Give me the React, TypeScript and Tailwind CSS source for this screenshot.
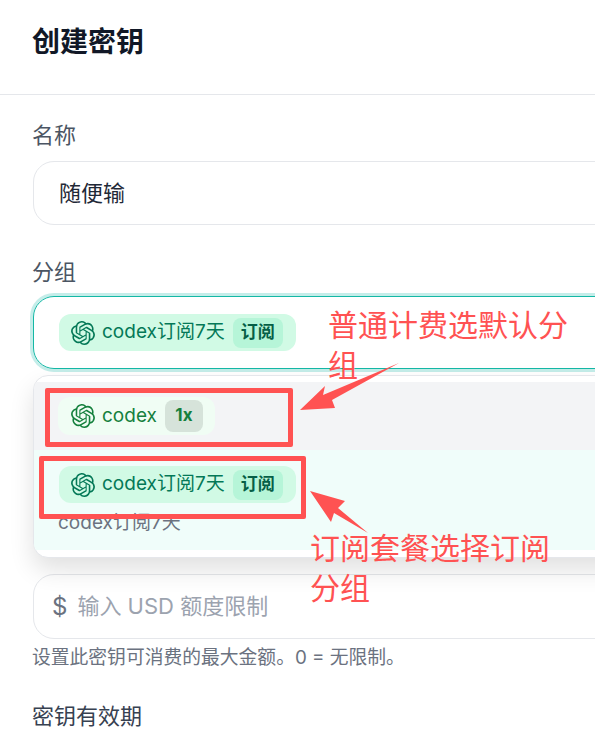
import React from "react";
import { SiOpenai } from "react-icons/si";

const font = "font-['Inter','Noto_Sans_CJK_SC',sans-serif]";

// group chip shown in the select and in the dropdown rows
const SubBadge: React.FC = () => (
  <span className="inline-flex h-[37px] w-[237px] items-center rounded-[12px] bg-[#d1fae5] pl-[12px] text-[19px] text-[#047857]">
    <SiOpenai className="h-[24px] w-[24px] shrink-0" />
    <span className="ml-[7px] whitespace-nowrap">codex订阅7天</span>
    <span className="ml-[8px] flex h-[30px] w-[50px] items-center justify-center rounded-[8px] bg-[#b6f5d8] text-[17px] font-bold text-[#065f46]">
      订阅
    </span>
  </span>
);

const PlainBadge: React.FC = () => (
  <span className="inline-flex h-[38px] w-[157px] items-center rounded-[12px] bg-[#f0fdf4] pl-[13px] text-[19px] text-[#15803d]">
    <SiOpenai className="h-[24px] w-[24px] shrink-0" />
    <span className="ml-[7px]">codex</span>
    <span className="ml-[8px] flex h-[32px] w-[38px] items-center justify-center rounded-[8px] bg-[#d6e3da] text-[17px] font-bold text-[#15803d]">
      1x
    </span>
  </span>
);

const App: React.FC = () => {
  return (
    <div className={`relative h-[745px] w-full overflow-hidden bg-white ${font}`}>
      <div className="flex h-[95px] items-center border-b border-[#e5e7eb] pb-[10px] pl-[32px]">
        <h1 className="text-[28px] font-bold text-[#111827]">创建密钥</h1>
      </div>

      <div className="w-[640px] pl-[33px]">
        <label className="-ml-px mt-[24px] block h-[32px] text-[22px] leading-[32px] text-[#4b5563]">名称</label>
        <div className="mt-[10px] flex h-[64px] items-center rounded-[21px] border border-[#e5e7eb] pl-[25px] text-[22px] text-[#1f2937]">
          随便输
        </div>

        <label className="-ml-px mt-[31px] block h-[32px] text-[22px] leading-[32px] text-[#4b5563]">分组</label>

        <div className="relative mt-[8px]">
          <div className="flex h-[73px] items-center rounded-[21px] border border-[#14b8a6] pl-[25px] shadow-[0_0_0_3px_rgba(20,184,166,0.25)]">
            <SubBadge />
          </div>

          {/* dropdown lies over the next field's label */}
          <div className="absolute left-0 right-0 top-[79px] z-10 h-[183px] overflow-hidden rounded-[15px] border border-[#e5e7eb] bg-white pt-[6px] shadow-[0_12px_24px_rgba(0,0,0,0.12)]">
            <div className="flex h-[68px] items-center bg-[#f3f4f6] pl-[24px]">
              <PlainBadge />
            </div>
            <div className="h-[100px] bg-[#f0fdfa] pl-[25px] pt-[16px]">
              <SubBadge />
              <p className="-ml-px mt-[6px] text-[19px] text-[#6b7280]">codex订阅7天</p>
            </div>
          </div>
        </div>

        <div className="mt-[205px] flex h-[65px] items-center rounded-[21px] border border-[#e5e7eb] pl-[18px] text-[22px]">
          <span className="text-[24px] text-[#6b7280]">$</span>
          <span className="ml-[10px] text-[#9ca3af]">输入 USD 额度限制</span>
        </div>
        <p className="-ml-px mt-[5px] text-[18.8px] leading-[27px] text-[#6b7280]">设置此密钥可消费的最大金额。0 = 无限制。</p>

        <label className="-ml-px mt-[29px] block text-[22px] leading-[32px] text-[#374151]">密钥有效期</label>
      </div>

      {/* red annotations pasted on top of the screenshot */}
      <div className="absolute left-[45px] top-[388px] z-20 h-[59px] w-[248px] rounded-[2px] border-[5px] border-[#ff5252]" />
      <div className="absolute left-[39px] top-[456px] z-20 h-[63px] w-[267px] rounded-[2px] border-[5px] border-[#ff5252]" />
      <svg className="absolute left-0 top-0 z-20" width="595" height="745" viewBox="0 0 595 745">
        <polygon points="300,410 325,386 323,395 399,363 332,400 335,408" fill="#ff5252" />
        <polygon points="310,491 345,501 338,508 368,533 334,513 331,522" fill="#ff5252" />
      </svg>
      <p className="absolute left-[328px] top-[305px] z-20 w-[244px] text-[30px] leading-[40px] text-[#ff5252]">
        普通计费选默认分组
      </p>
      <p className="absolute left-[310px] top-[528px] z-20 w-[244px] text-[30px] leading-[40px] text-[#ff5252]">
        订阅套餐选择订阅分组
      </p>
    </div>
  );
};

export default App;
